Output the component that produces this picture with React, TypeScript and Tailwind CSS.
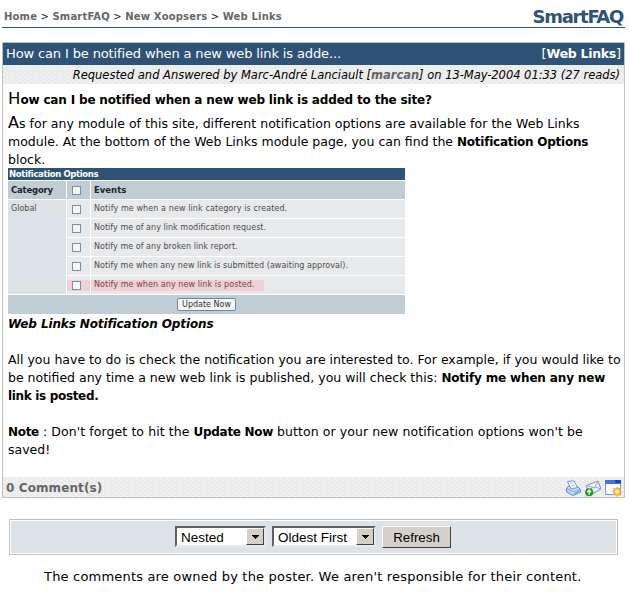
import type { ReactNode } from "react";

const dots =
  "bg-[#ebebeb] bg-[radial-gradient(circle_at_1.5px_1.5px,#ffffff_0.5px,transparent_0.8px),radial-gradient(circle_at_4.5px_3.5px,#ffffff_0.5px,transparent_0.8px)] bg-[length:6px_4px]";

function Line({ className = "", children }: { className?: string; children?: ReactNode }) {
  return (
    <div className="h-[18px] whitespace-nowrap text-[12.5px] leading-[20px]">
      <span className={className}>{children}</span>
    </div>
  );
}

function Check() {
  return <span className="block size-[9px] border border-[#7890a8] bg-[#f4f5f5]" />;
}

function Select({ label, width }: { label: string; width: string }) {
  return (
    <div
      className={`flex h-[21px] border-2 border-t-[#606060] border-l-[#606060] border-r-[#e8e8e8] border-b-[#e8e8e8] bg-white ${width}`}
    >
      <span className="flex-1 whitespace-nowrap pl-[4px] font-['Liberation_Sans',sans-serif] text-[13.5px] leading-[19px]">
        {label}
      </span>
      <span className="flex w-[18px] items-center justify-center border border-t-white border-l-white border-r-[#404040] border-b-[#404040] bg-[#d4d0c8]">
        <svg width="7" height="4" shapeRendering="crispEdges">
          <path d="M0 0H7V1H6V2H5V3H4V4H3V3H2V2H1V1H0Z" />
        </svg>
      </span>
    </div>
  );
}

const events = [
  { text: "Notify me when a new link category is created.", fit: "tracking-[0.1px]" },
  { text: "Notify me of any link modification request.", fit: "tracking-[0.03px]" },
  { text: "Notify me of any broken link report.", fit: "tracking-[0.03px]" },
  { text: "Notify me when any new link is submitted (awaiting approval).", fit: "tracking-[0.05px]" },
  { text: "Notify me when any new link is posted.", fit: "tracking-[0.08px]" },
];

function Options() {
  return (
    <div className="h-[146px] w-[397px] text-[8px] text-[#4c4c50]">
      <div className="h-[12px] bg-[#2f5376] pl-[1px] text-[8.5px] leading-[13px] font-bold text-white">
        <span className="tracking-[-0.36px]">Notification Options</span>
      </div>
      <div className="mt-px flex h-[18px] gap-px bg-white text-[8.5px] leading-[18px] font-bold text-[#202428]">
        <div className="w-[58px] bg-[#c0cdd5] pl-[3px] tracking-[-0.2px]">Category</div>
        <div className="flex w-[23px] items-center justify-center bg-[#c0cdd5] pr-1">
          <Check />
        </div>
        <div className="flex-1 bg-[#c0cdd5] pl-[3px]">Events</div>
      </div>
      <div className="mt-px flex h-[94px] gap-px">
        <div className="w-[58px] bg-[#dde2e7] pl-[3px] leading-[18px]">Global</div>
        <div className="flex flex-1 flex-col gap-px">
          {events.map((e, i) => (
            <div key={e.text} className="flex h-[18px] gap-px">
              <div className="flex w-[23px] items-center bg-[#e8e9eb]">
                <span className={`flex h-[11px] w-full items-center pl-[5px] ${i === 4 ? "bg-[#efd0d4]" : ""}`}>
                  <Check />
                </span>
              </div>
              <div className="flex flex-1 items-center bg-[#e8e9eb]">
                <span
                  className={`h-[11px] whitespace-nowrap pl-[3px] leading-[10px] ${i === 4 ? "w-[173px] bg-[#efd0d4] text-[#7c4046]" : ""}`}
                >
                  <span className={e.fit}>{e.text}</span>
                </span>
              </div>
            </div>
          ))}
        </div>
      </div>
      <div className="mt-px flex h-[19px] items-center justify-center bg-[#c0cdd5]">
        <span className="h-[13px] w-[59px] rounded-[2px] border border-[#6d87a0] bg-[#f5f5f4] text-center leading-[12px] whitespace-nowrap text-[#303438]">
          Update Now
        </span>
      </div>
    </div>
  );
}

function PrintIcon() {
  return (
    <svg width="17" height="17" viewBox="0 0 17 17">
      <path d="M1.5 8L4 6L12 6L15.5 9.5V12L8 15.5L1.5 12Z" fill="#c5d7f7" stroke="#6485cf" />
      <path d="M2.5 1.5L9 0.8L12.5 7.5L6 9Z" fill="#f8fbff" stroke="#7795d8" />
      <path d="M5 3.5L9 3M6 5.5L10 5" stroke="#b9c9ec" />
      <path d="M1.5 8.5L8 12L15.5 9.5" stroke="#86a2e2" fill="none" />
      <path d="M6 13.8L8 12.2L14 10.5L15 12Z" fill="#eaf3ff" />
      <path d="M9 13.6L14.5 11.2" stroke="#31bce5" strokeWidth="1.3" />
    </svg>
  );
}

function MailIcon() {
  return (
    <svg width="17" height="17" viewBox="0 0 17 17">
      <path d="M1.5 5.5L13 1L16 9L6 14.5L3 13Z" fill="#eef1fa" stroke="#8790b4" />
      <path d="M1.5 5.5L9.5 8L13 1M4 12L7.5 7.5M16 9L10.5 7" stroke="#9aa3c6" fill="none" />
      <circle cx="4.2" cy="12.2" r="4" fill="#169516" />
      <path d="M4.2 14.8V10.5M2.2 12.2L4.2 10L6.2 12.2" stroke="white" strokeWidth="1.3" fill="none" />
    </svg>
  );
}

function WindowIcon() {
  return (
    <svg width="17" height="17" viewBox="0 0 17 17">
      <rect x="0.5" y="0.5" width="15" height="14" fill="#fbfcff" stroke="#7f9ae0" />
      <rect x="0" y="0" width="16" height="4" fill="#3f72e8" />
      <path d="M10 0H16V3H10Z" fill="#1746c4" />
      <path
        d="M12 7.2L13 9L15 8.5L14.8 10.5L16.5 11.7L14.8 13L15 15L13 14.7L12 16.4L10.8 14.7L8.8 15L9.2 13L7.5 11.7L9.2 10.5L8.8 8.5L10.8 9Z"
        fill="#ffc74a"
        stroke="#ec9c24"
        strokeWidth="0.8"
      />
      <circle cx="12" cy="11.8" r="1.8" fill="#fff4bb" />
    </svg>
  );
}

export default function App() {
  return (
    <div className="h-[598px] w-[629px] overflow-hidden bg-white font-['DejaVu_Sans',Verdana,sans-serif] text-[13px] text-black">
      <header className="mr-[4px] ml-[2px] flex h-[28px] items-end justify-between border-b border-[#2f5376] pl-[2px]">
        <nav className="h-[18px] text-[10px] leading-[16px] whitespace-nowrap text-[#222]">
          <span className="tracking-[0.18px]">
            <b className="text-[#666]">Home</b> &gt; <b className="text-[#666]">SmartFAQ</b> &gt;{" "}
            <b className="text-[#666]">New Xoopsers</b> &gt; <b className="text-[#666]">Web Links</b>
          </span>
        </nav>
        <h1 className="h-[21px] pr-[2px] text-[18px] leading-[21px] font-bold text-[#2f5376]">
          <span className="tracking-[-1.3px]">SmartFAQ</span>
        </h1>
      </header>
      <article className="mt-[14px] ml-[2px] h-[456px] w-[623px] border border-[#c0c0c0]">
        <div className="flex h-[22px] justify-between bg-[#2f5376] pr-[3px] pl-[3px] leading-[21px] whitespace-nowrap text-white">
          <span className="tracking-[-0.13px]">How can I be notified when a new web link is adde...</span>
          <span>
            [<b className="text-[12.5px] tracking-[-0.3px]">Web Links</b>]
          </span>
        </div>
        <div className={`h-[19px] pr-[4px] text-right text-[11.5px] leading-[20px] whitespace-nowrap italic ${dots}`}>
          <span className="tracking-[-0.02px]">
            Requested and Answered by Marc-André Lanciault [<b className="text-[#666]">marcan</b>] on 13-May-2004 01:33
            (27 reads)
          </span>
        </div>
        <div className="h-[393px] pl-[5px]">
          <div className="h-[30px] text-[12px] leading-[30px] font-bold whitespace-nowrap">
            <span className="text-[16.5px] font-normal">H</span>
            <span className="tracking-[-0.17px]">ow can I be notified when a new web link is added to the site?</span>
          </div>
          <Line className="tracking-[0.03px]">
            <span className="text-[16px] leading-none">A</span>s for any module of this site, different notification
            options are available for the Web Links
          </Line>
          <Line>
            module. At the bottom of the Web Links module page, you can find the{" "}
            <b className="text-[12px] tracking-[-0.25px]">Notification Options</b>
          </Line>
          <Line>block.</Line>
          <Options />
          <Line className="text-[12px] font-bold tracking-[-0.12px] italic">Web Links Notification Options</Line>
          <Line />
          <Line>All you have to do is check the notification you are interested to. For example, if you would like to</Line>
          <Line>
            be notified any time a new web link is published, you will check this:{" "}
            <b className="text-[12px] tracking-[-0.15px]">Notify me when any new</b>
          </Line>
          <Line>
            <b className="text-[12px] tracking-[-0.33px]">link is posted.</b>
          </Line>
          <Line />
          <Line className="tracking-[0.08px]">
            <b className="text-[12px] tracking-[-0.3px]">Note</b> : Don't forget to hit the{" "}
            <b className="text-[12px] tracking-[-0.3px]">Update Now</b> button or your new notification options won't be
          </Line>
          <Line>saved!</Line>
        </div>
        <div className={`flex h-[20px] justify-between pr-[2px] pl-[3px] ${dots}`}>
          <b className="text-[12px] leading-[22px] tracking-[0.1px] whitespace-nowrap text-[#666]">0 Comment(s)</b>
          <div className="flex gap-[3px] pt-[3px]">
            <PrintIcon />
            <MailIcon />
            <WindowIcon />
          </div>
        </div>
      </article>
      <section className="mt-[21px] ml-[9px] h-[36px] w-[609px] border border-[#c0c0c0] p-px">
        <div className="flex h-[32px] bg-[#dde2e6] pt-[5px] pl-[164px]">
          <Select label="Nested" width="w-[91px]" />
          <span className="w-[6px]" />
          <Select label="Oldest First" width="w-[104px]" />
          <span className="w-[6px]" />
          <button className="h-[22px] w-[69px] border border-t-white border-r-[#404040] border-b-[#404040] border-l-white bg-[#d4d0c8] pt-px font-['Liberation_Sans',sans-serif] text-[13.3px] leading-[19px]">
            Refresh
          </button>
        </div>
      </section>
      <p className="mt-[12px] pl-[44px] leading-[20px] whitespace-nowrap">
        <span className="tracking-[0.19px]">
          The comments are owned by the poster. We aren't responsible for their content.
        </span>
      </p>
    </div>
  );
}
